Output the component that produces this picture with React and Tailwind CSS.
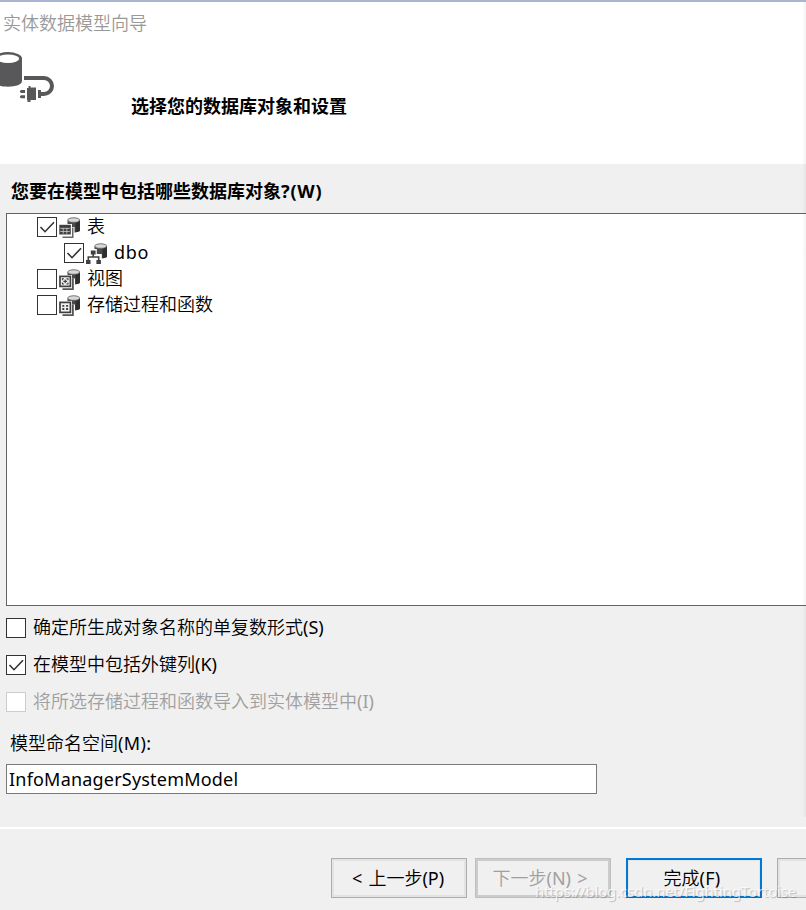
const FONT = 'font-["Noto_Sans","Noto_Sans_CJK_SC",sans-serif]';

function CheckBox({ checked, disabled }) {
  return (
    <span
      className={`flex h-5 w-5 shrink-0 items-center justify-center border bg-white ${
        disabled ? 'border-[#cccccc]' : 'border-[#333333]'
      }`}
    >
      {checked && (
        <svg width="18" height="18" viewBox="0 0 18 18" fill="none" stroke="#333" strokeWidth="1.6">
          <path d="M2.5 9l4.5 4.7L16 4.3" />
        </svg>
      )}
    </span>
  );
}

function Cylinder() {
  return (
    <g>
      <path d="M8.5 3v10.5c0 1.2 2.8 2 6 2s6.5-.9 6.5-2.2V3z" fill="#4b4a4b" />
      <path d="M16.5 5.5v9.7c2.6-.2 4.5-.9 4.5-1.9V3z" fill="#2f2e2f" />
      <ellipse cx="14.7" cy="3" rx="6.3" ry="2.8" fill="#777" />
      <ellipse cx="14.7" cy="3" rx="5.4" ry="1.8" fill="#d8d8d8" />
    </g>
  );
}

function TreeIcon({ kind }) {
  return (
    <svg className="shrink-0" width="23" height="22" viewBox="0 0 23 22">
      <Cylinder />
      {kind === 'table' && (
        <g>
          <path d="M2.5 10h13v11h-13z" fill="#fff" />
          <path d="M13 10.5v9H3.5v1.5h11V10.5z" fill="#666" />
          <path d="M0 7h13v12H0z" fill="#fff" />
          <path d="M.3 7.8h11.5v9.7H.3z" fill="#414041" />
          <path d="M1.3 11.4h9.5M1.3 14.5h9.5M4.2 10.8v6M7.8 10.8v6" stroke="#ccc" strokeWidth=".8" />
        </g>
      )}
      {kind === 'schema' && (
        <g>
          <path d="M3.5 6h7.3v5h5v11H0v-7l3.5-2z" fill="#fff" />
          <path d="M7.2 10v3.8M2.3 18v-4h10.4v4" fill="none" stroke="#414041" strokeWidth="1.6" />
          <path d="M4.8 7.5h4.8v4H4.8zM0 17h4.5v4H0zM10.4 17h4.5v4h-4.5z" fill="#414041" />
        </g>
      )}
      {(kind === 'view' || kind === 'procedure') && (
        <g>
          <path d="M0 6h13v3.5h3V22H3v-3H0z" fill="#fff" />
          <path d="M13.9 9.5v10.6H3.5" fill="none" stroke="#555" strokeWidth="1.8" />
          <rect x="1" y="7.4" width="10.4" height="10" fill="#f2f2f2" stroke="#414041" strokeWidth="1.7" />
          {kind === 'view' ? (
            <path d="M3.4 11.3V9.8H5M7.4 9.8H9v1.5M9 13.5V15H7.4M5 15H3.4v-1.5M6.2 10.6v3.6M4.4 12.4H8" fill="none" stroke="#414041" strokeWidth="1.1" />
          ) : (
            <path d="M3.3 10.8h2M7.1 10.8h2M3.3 14h2M7.1 14h2" stroke="#414041" strokeWidth="1.8" />
          )}
        </g>
      )}
    </svg>
  );
}

function TreeRow({ label, kind, checked, nested, latin }) {
  return (
    <div className={`flex h-[26px] items-center ${nested ? 'pl-[57px]' : 'pl-[30px]'}`}>
      <CheckBox checked={checked} />
      <span className="ml-0.5 flex pt-px"><TreeIcon kind={kind} /></span>
      <span className={`ml-[5px] whitespace-nowrap pb-0.5 leading-6 ${latin ? 'font-normal tracking-[0.7px]' : ''}`}>{label}</span>
    </div>
  );
}

function Option({ label, tail, checked, disabled }) {
  return (
    <div className={`flex h-[37px] items-center ${disabled ? 'text-[#a0a0a0]' : ''}`}>
      <CheckBox checked={checked} disabled={disabled} />
      <span className="ml-[7px] whitespace-nowrap pb-0.5 leading-6">{label}<span className="font-normal">{tail}</span></span>
    </div>
  );
}

function DataSourceIcon() {
  return (
    <svg className="block" width="56" height="54" viewBox="0 0 56 54">
      <path d="M-6 6v23c0 3.5 6 5.7 14 5.7s14-2.2 14-5.7V6z" fill="#58585a" />
      <ellipse cx="8" cy="6.5" rx="14" ry="6.5" fill="#58585a" />
      <ellipse cx="8" cy="6.7" rx="11.2" ry="4.2" fill="#fff" />
      <path d="M24 26h20a8 8 0 0 1 0 16h-3" fill="none" stroke="#58585a" strokeWidth="4" />
      <path d="M27 36h1.5v-2h2v1.5h5.5v12.5h-5.5V50h-3v-2H27zM38 38h3v2h2v4h-2v2h-3zM21 38h4v3h-4l-1-1v-1zM21 43.3h4v3h-4l-1-1v-1z" fill="#58585a" />
    </svg>
  );
}

export default function App() {
  return (
    <div className={`relative flex h-[910px] w-[806px] flex-col overflow-hidden bg-[#f0f0f0] text-lg font-[350] leading-[26px] text-black ${FONT}`}>
      <header className="h-[164px] shrink-0 border-t-2 border-[#a9b4d2] bg-white">
        <div className="h-[50px] pl-[3px] pt-2 text-[#999999]">实体数据模型向导</div>
        <div className="flex">
          <DataSourceIcon />
          <h1 className="ml-[75px] mt-[41px] font-bold">选择您的数据库对象和设置</h1>
        </div>
      </header>

      <main className="flex h-[663px] shrink-0 flex-col pl-1.5">
        <h2 className="h-[49px] shrink-0 whitespace-nowrap pl-[5px] pt-[14px] font-bold">
          您要在模型中包括哪些数据库对象<span className="tracking-[0.8px]">?(W)</span>
        </h2>
        <div className="h-[393px] shrink-0 border-y border-l border-[#646464] bg-white">
          <TreeRow label="表" kind="table" checked />
          <TreeRow label="dbo" kind="schema" checked nested latin />
          <TreeRow label="视图" kind="view" />
          <TreeRow label="存储过程和函数" kind="procedure" />
        </div>
        <div className="pt-[3px]">
          <Option label="确定所生成对象名称的单复数形式" tail="(S)" />
          <Option label="在模型中包括外键列" tail="(K)" checked />
          <Option label="将所选存储过程和函数导入到实体模型中" tail="(I)" disabled />
        </div>
        <label className="mt-[10px] pl-1">模型命名空间<span className="font-normal tracking-[0.4px]">(M):</span></label>
        <div className="mt-[8px] flex h-[30px] w-[591px] items-center border border-[#7a7a7a] bg-white pl-0.5">
          <span className="font-normal tracking-[0.2px]">InfoManagerSystemModel</span>
        </div>
      </main>

      <footer className="flex flex-1 border-t-2 border-white pl-[331px] pt-[29px]">
        <button className="h-10 w-[136px] shrink-0 whitespace-nowrap border border-[#adadad] pr-0.5 shadow-[inset_0_0_0_2px_#e3e3e3] [word-spacing:1.5px]"><span className="font-normal">&lt; </span>上一步<span className="font-normal">(P)</span></button>
        <button className="ml-2 h-10 w-[136px] shrink-0 whitespace-nowrap border border-[#bfbfbf] pr-1.5 text-[#a0a0a0] shadow-[inset_0_0_0_2px_#cccccc] [word-spacing:1.5px]">下一步<span className="font-normal">(N) &gt;</span></button>
        <button className="ml-[15px] h-10 w-[136px] shrink-0 whitespace-nowrap border-2 border-[#0078d7] pr-1 shadow-[inset_0_0_0_1px_#e5e5e5]">完成<span className="font-normal tracking-[0.3px]">(F)</span></button>
        <div className="ml-[15px] h-10 w-[136px] shrink-0 border border-[#adadad] shadow-[inset_0_0_0_2px_#e3e3e3]" />
      </footer>

      <div className="absolute left-[535px] top-[881px] whitespace-nowrap text-[15px] font-normal leading-5 tracking-[-0.16px] text-white/75 [text-shadow:1px_1px_1px_rgba(0,0,0,0.22)]">
        https://blog.csdn.net/FightingTortoise
      </div>
      <div className="absolute right-0 top-0.5 h-[815px] w-1 bg-gradient-to-r from-transparent to-black/5" />
    </div>
  );
}
